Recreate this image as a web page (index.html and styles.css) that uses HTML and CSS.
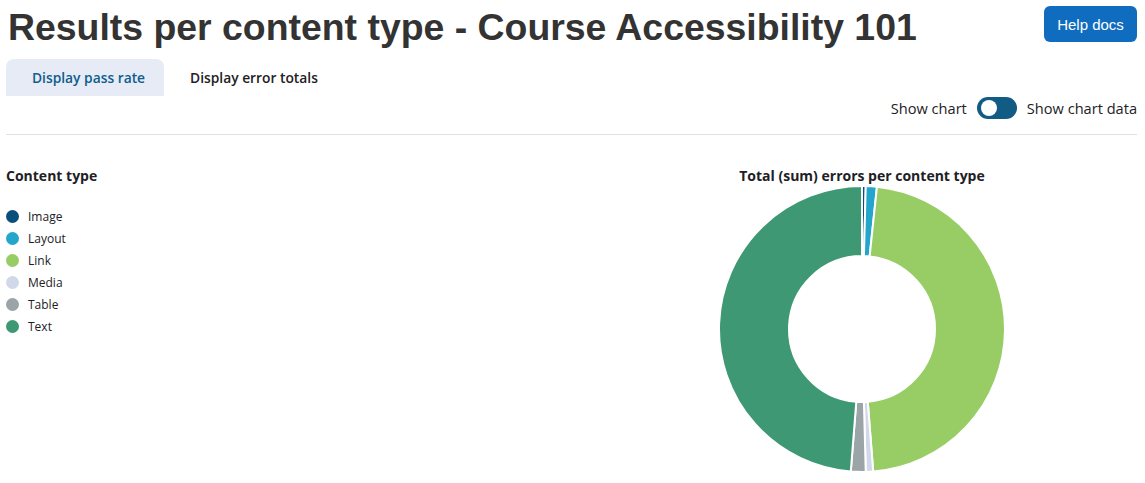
FILE: index.html
```html
<!DOCTYPE html>
<html lang="en">
<head>
<meta charset="utf-8">
<title>Results per content type</title>
<link rel="stylesheet" href="styles.css">
</head>
<body>
<div class="page">
  <header class="header">
    <h1 class="title">Results per content type - Course Accessibility 101</h1>
    <button class="help-btn" type="button">Help docs</button>
  </header>
  <nav class="tabs">
    <a class="tab tab-active">Display pass rate</a>
    <a class="tab">Display error totals</a>
  </nav>
  <div class="toggle-row">
    <span class="toggle-label">Show chart</span>
    <span class="toggle"><span class="knob"></span></span>
    <span class="toggle-label">Show chart data</span>
  </div>
  <div class="divider"></div>
  <section class="content">
    <div class="legend">
      <h2 class="legend-title">Content type</h2>
      <ul class="legend-list">
        <li class="legend-item"><span class="dot c-image"></span>Image</li>
        <li class="legend-item"><span class="dot c-layout"></span>Layout</li>
        <li class="legend-item"><span class="dot c-link"></span>Link</li>
        <li class="legend-item"><span class="dot c-media"></span>Media</li>
        <li class="legend-item"><span class="dot c-table"></span>Table</li>
        <li class="legend-item"><span class="dot c-text"></span>Text</li>
      </ul>
    </div>
    <div class="chart">
      <h2 class="chart-title">Total (sum) errors per content type</h2>
      <svg class="donut" width="290" height="290" viewBox="-145 -145 290 290">
        <g stroke="#fff" stroke-width="2" stroke-linejoin="round">
          <path id="seg0" fill="#0a4f7a"/>
          <path id="seg1" fill="#23a5cc"/>
          <path id="seg2" fill="#98cd66"/>
          <path id="seg3" fill="#d0d8ea"/>
          <path id="seg4" fill="#9ba4a6"/>
          <path id="seg5" fill="#3d9873"/>
        </g>
      </svg>
    </div>
  </section>
</div>
<script src="chart.js"></script>
</body>
</html>
```

FILE: chart.js
```js
(function () {
  var data = [1, 3, 113, 2, 4, 117];
  var total = data.reduce(function (a, b) { return a + b; }, 0);
  var R = 143, r = 73;
  var start = 0;
  function pt(rad, ang) {
    var a = (ang - 90) * Math.PI / 180;
    return (rad * Math.cos(a)).toFixed(3) + ' ' + (rad * Math.sin(a)).toFixed(3);
  }
  data.forEach(function (v, i) {
    var sweep = v / total * 360;
    var end = start + sweep;
    var large = sweep > 180 ? 1 : 0;
    var d = 'M ' + pt(R, start) +
      ' A ' + R + ' ' + R + ' 0 ' + large + ' 1 ' + pt(R, end) +
      ' L ' + pt(r, end) +
      ' A ' + r + ' ' + r + ' 0 ' + large + ' 0 ' + pt(r, start) + ' Z';
    document.getElementById('seg' + i).setAttribute('d', d);
    start = end;
  });
})();
```

FILE: styles.css
```css
* { box-sizing: border-box; }
html, body { margin: 0; padding: 0; background: #fff; }
body {
  font-family: "Open Sans", "Noto Sans", sans-serif;
  color: #1d2125;
}
.page { padding: 0 8px 0 6px; }
.header {
  display: flex;
  justify-content: space-between;
  align-items: flex-start;
  padding-top: 6px;
}
.title {
  margin: 0;
  padding-left: 2px;
  font-family: "Liberation Sans", Arial, sans-serif;
  font-weight: 700;
  font-size: 37.4px;
  line-height: 42px;
  color: #333333;
}
.help-btn {
  font-family: "Liberation Sans", Arial, sans-serif;
  font-size: 15px;
  color: #fff;
  background: #0f6cbf;
  border: none;
  border-radius: 6px;
  width: 93px;
  height: 36px;
  padding: 0;
}
.tabs {
  display: flex;
  margin-top: 11px;
}
.tab {
  display: block;
  height: 37px;
  line-height: 37px;
  font-size: 13.8px;
  font-weight: 600;
  color: #1d2125;
  padding: 0 19px 0 26px;
  border-radius: 8px 8px 0 0;
}
.tab-active {
  background: #e6ebf5;
  color: #0f5d8c;
}
.toggle-row {
  display: flex;
  justify-content: flex-end;
  align-items: center;
  gap: 10px;
  margin-top: 1px;
  height: 22px;
}
.toggle-label { font-size: 14.6px; color: #1d2125; }
.toggle {
  display: flex;
  align-items: center;
  width: 40px;
  height: 22px;
  border-radius: 11px;
  background: #115b85;
  padding-left: 4px;
}
.knob {
  width: 16px;
  height: 16px;
  border-radius: 50%;
  background: #fff;
}
.divider {
  height: 1px;
  background: #dee2e6;
  margin-top: 15px;
}
.content {
  display: grid;
  grid-template-columns: 1fr 550px;
}
.legend { padding-top: 31px; }
.legend-title {
  margin: 0;
  font-size: 14px;
  font-weight: 700;
  color: #1d2125;
  line-height: 20px;
}
.legend-list {
  list-style: none;
  margin: 19px 0 0;
  padding: 0;
}
.legend-item {
  display: flex;
  align-items: center;
  height: 22px;
  font-size: 12px;
  font-weight: 500;
  color: #1d2125;
}
.dot {
  width: 13px;
  height: 13px;
  border-radius: 50%;
  margin-right: 9px;
}
.c-image { background: #0a4f7a; }
.c-layout { background: #23a5cc; }
.c-link { background: #98cd66; }
.c-media { background: #d0d8ea; }
.c-table { background: #9ba4a6; }
.c-text { background: #3d9873; }
.chart {
  display: flex;
  flex-direction: column;
  align-items: center;
  padding-top: 31px;
}
.chart-title {
  margin: 0;
  font-size: 14px;
  font-weight: 700;
  line-height: 20px;
  color: #1d2125;
}
.donut { display: block; margin-top: -2px; }
```
